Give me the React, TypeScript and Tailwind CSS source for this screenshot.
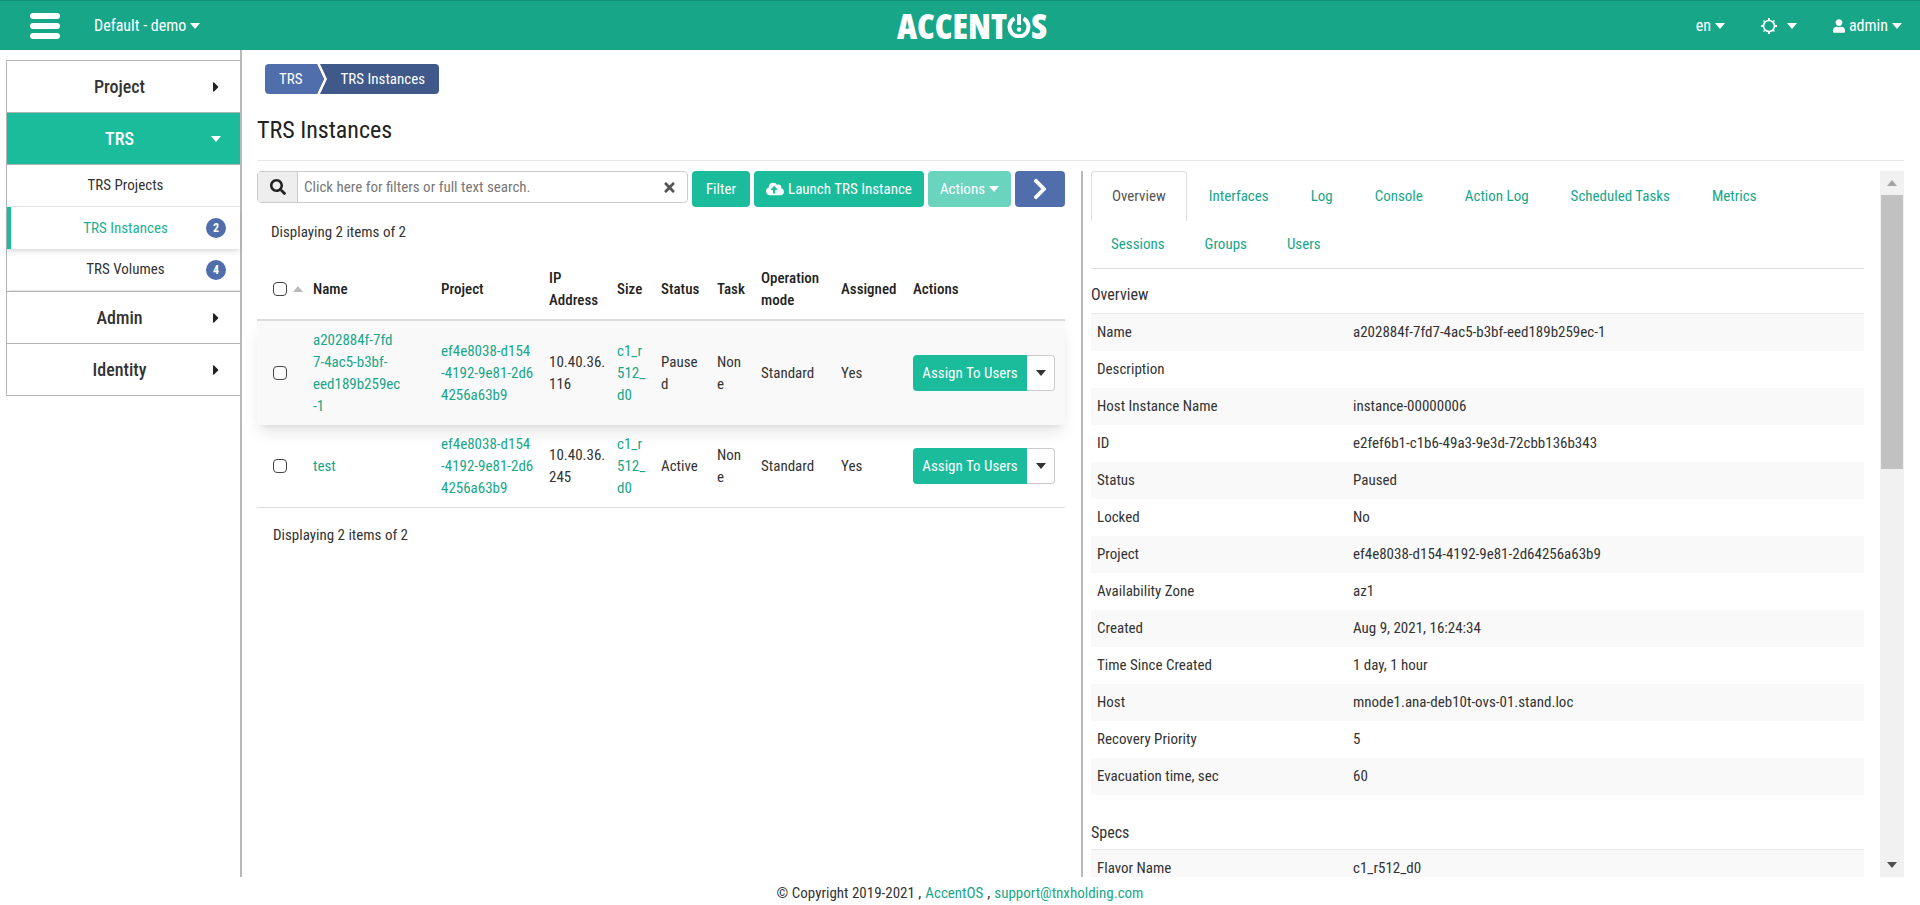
import { FaCaretRight, FaChevronRight, FaCloudUploadAlt, FaSearch, FaTimes, FaUser } from 'react-icons/fa'

function Caret({ className = '' }: { className?: string }) {
  return (
    <svg viewBox="0 0 10 6" className={`w-2.5 h-1.5 fill-current ${className}`}>
      <path d="M0 0h10L5 6z" />
    </svg>
  )
}

function SunIcon() {
  return (
    <svg viewBox="0 0 16 16" className="h-4 w-4 fill-current">
      <circle cx="8" cy="8" r="5.5" fill="none" stroke="currentColor" strokeWidth="1.6" />
      <path d="M7 0h2v2H7zM7 14h2v2H7zM0 7h2v2H0zM14 7h2v2h-2zM2.2 2.2l1.6.2.2 1.6-1.6-.2zM13.8 2.2l-.2 1.6-1.6.2.2-1.6zM2.2 13.8l.2-1.6 1.6-.2-.2 1.6zM13.8 13.8l-1.6-.2-.2-1.6 1.6.2z" />
    </svg>
  )
}

function Checkbox() {
  return <input type="checkbox" readOnly className="block h-3.5 w-3.5 appearance-none rounded-sm border border-[#444] bg-white" />
}

function NavGroup({ label, active }: { label: string; active?: boolean }) {
  return (
    <div
      className={`flex h-13 items-center pl-10 text-lg font-medium border-b border-[#b3b3b3] ${
        active ? 'bg-[#1abc9c] text-white' : 'text-[#333]'
      }`}
    >
      <span className="flex-1 text-center">{label}</span>
      <span className="flex w-12 justify-center">
        {active ? <Caret /> : <FaCaretRight className="text-base text-[#222]" />}
      </span>
    </div>
  )
}

function NavItem({ label, badge, active }: { label: string; badge?: number; active?: boolean }) {
  return (
    <div
      className={`flex h-10.5 items-center pl-12 border-l-4 ${
        active
          ? 'border-l-[#1abc9c] text-[#1ab394] shadow-md relative'
          : 'border-l-transparent text-[#333] border-b border-b-[#e7e7e7]'
      }`}
    >
      <span className="flex-1 text-center">{label}</span>
      <span className="flex w-12 justify-center">
        {badge && (
          <span className="flex h-5 w-5 items-center justify-center rounded-full bg-[#506eab] text-xs font-bold text-white">
            {badge}
          </span>
        )}
      </span>
    </div>
  )
}

function Sidebar() {
  return (
    <aside className="w-[242px] shrink-0 border-r-2 border-[#b9b9b9] pl-1.5 pt-2.5">
      <div className="border-l border-t border-[#b3b3b3]">
        <NavGroup label="Project" />
        <NavGroup label="TRS" active />
        <NavItem label="TRS Projects" />
        <NavItem label="TRS Instances" badge={2} active />
        <NavItem label="TRS Volumes" badge={4} />
        <div className="border-t border-[#b3b3b3]" />
        <NavGroup label="Admin" />
        <NavGroup label="Identity" />
      </div>
    </aside>
  )
}

function Lines({ lines }: { lines: string[] }) {
  return (
    <>
      {lines.map((line) => (
        <span key={line} className="block whitespace-nowrap">
          {line}
        </span>
      ))}
    </>
  )
}

const projectLines = ['ef4e8038-d154', '-4192-9e81-2d6', '4256a63b9']
const sizeLines = ['c1_r', '512_', 'd0']

const rows = [
  {
    name: ['a202884f-7fd', '7-4ac5-b3bf-', 'eed189b259ec', '-1'],
    ip: ['10.40.36.', '116'],
    status: ['Pause', 'd'],
    highlight: true,
  },
  {
    name: ['test'],
    ip: ['10.40.36.', '245'],
    status: ['Active'],
    highlight: false,
  },
]

function InstancesTable() {
  const th = 'px-2 py-2 text-left align-middle font-medium'
  const td = 'px-2 py-2 align-middle'
  return (
    <table className="w-full table-fixed border-collapse leading-5.5">
      <thead className="text-[#222]">
        <tr className="border-b-2 border-[#ddd]">
          <th className="w-12 py-2 pl-4 text-left align-middle">
            <span className="flex items-center gap-1.5">
              <Checkbox />
              <Caret className="rotate-180 text-[#bbb]" />
            </span>
          </th>
          <th className={`w-32 ${th}`}>Name</th>
          <th className={`w-27 ${th}`}>Project</th>
          <th className={`w-17 ${th}`}>
            IP
            <br />
            Address
          </th>
          <th className={`w-11 ${th}`}>Size</th>
          <th className={`w-14 ${th}`}>Status</th>
          <th className={`w-11 ${th}`}>Task</th>
          <th className={`w-20 ${th}`}>
            Operation
            <br />
            mode
          </th>
          <th className={`w-18 ${th}`}>Assigned</th>
          <th className={th}>Actions</th>
        </tr>
      </thead>
      <tbody className="text-[#333]">
        {rows.map((row) => (
          <tr key={row.name[0]} className={row.highlight ? 'bg-[#f9f9f9] shadow-lg' : 'border-b border-[#ddd]'}>
            <td className="py-2 pl-4 align-middle">
              <Checkbox />
            </td>
            <td className={`${td} text-[#18a689]`}>
              <Lines lines={row.name} />
            </td>
            <td className={`${td} text-[#18a689]`}>
              <Lines lines={projectLines} />
            </td>
            <td className={td}>
              <Lines lines={row.ip} />
            </td>
            <td className={`${td} text-[#18a689]`}>
              <Lines lines={sizeLines} />
            </td>
            <td className={td}>
              <Lines lines={row.status} />
            </td>
            <td className={td}>
              <Lines lines={['Non', 'e']} />
            </td>
            <td className={td}>Standard</td>
            <td className={td}>Yes</td>
            <td className={td}>
              <div className="flex h-9 w-[142px]">
                <button className="flex-1 rounded-l bg-[#1abc9c] text-white whitespace-nowrap">Assign To Users</button>
                <button className="flex w-7 items-center justify-center rounded-r border border-l-0 border-[#ccc] bg-white text-[#333]">
                  <Caret />
                </button>
              </div>
            </td>
          </tr>
        ))}
      </tbody>
    </table>
  )
}

function LeftPanel() {
  return (
    <section className="w-[808px] shrink-0">
      <div className="flex items-start gap-1">
        <div className="flex h-8 flex-1 items-center rounded border border-[#ccc]">
          <span className="flex h-full w-10 items-center justify-center border-r border-[#ccc] bg-[#eee] text-base text-[#222]">
            <FaSearch />
          </span>
          <input
            className="min-w-0 flex-1 px-1.5 outline-none placeholder:text-[#777]"
            placeholder="Click here for filters or full text search."
            readOnly
          />
          <FaTimes className="mr-2.5 text-[#555]" />
        </div>
        <button className="h-9 rounded bg-[#1abc9c] px-3.5 text-white">Filter</button>
        <button className="flex h-9 items-center gap-1 rounded bg-[#1abc9c] px-3 text-white">
          <FaCloudUploadAlt className="text-lg" />
          Launch TRS Instance
        </button>
        <button className="flex h-9 items-center gap-1 rounded bg-[#6bd4bf] px-3 text-white">
          Actions
          <Caret />
        </button>
        <button className="flex h-9 w-12.5 items-center justify-center rounded bg-[#506eab] text-2xl text-white">
          <FaChevronRight />
        </button>
      </div>
      <p className="mt-3.5 mb-4 px-3.5 leading-5.5 text-[#333]">Displaying 2 items of 2</p>
      <InstancesTable />
      <p className="mt-4 px-4 leading-5.5 text-[#333]">Displaying 2 items of 2</p>
    </section>
  )
}

const firstTabs = ['Interfaces', 'Log', 'Console', 'Action Log', 'Scheduled Tasks', 'Metrics']
const secondTabs = ['Sessions', 'Groups', 'Users']

const overview = [
  ['Name', 'a202884f-7fd7-4ac5-b3bf-eed189b259ec-1'],
  ['Description', ''],
  ['Host Instance Name', 'instance-00000006'],
  ['ID', 'e2fef6b1-c1b6-49a3-9e3d-72cbb136b343'],
  ['Status', 'Paused'],
  ['Locked', 'No'],
  ['Project', 'ef4e8038-d154-4192-9e81-2d64256a63b9'],
  ['Availability Zone', 'az1'],
  ['Created', 'Aug 9, 2021, 16:24:34'],
  ['Time Since Created', '1 day, 1 hour'],
  ['Host', 'mnode1.ana-deb10t-ovs-01.stand.loc'],
  ['Recovery Priority', '5'],
  ['Evacuation time, sec', '60'],
]

function DetailRow({ label, value, shaded }: { label: string; value: string; shaded: boolean }) {
  return (
    <div className={`flex h-9.25 items-center pl-1.5 text-[#333] ${shaded ? 'bg-[#f9f9f9]' : ''}`}>
      <span className="w-64">{label}</span>
      <span>{value}</span>
    </div>
  )
}

function DetailPanel() {
  return (
    <section className="flex min-h-0 flex-1 border-l-2 border-[#b9b9b9] pl-2">
      <div className="min-w-0 flex-1 overflow-hidden">
        <div className="flex h-12.5 text-[#18a689]">
          <span className="flex items-center rounded-t border border-b-0 border-[#ddd] px-5 text-[#555]">Overview</span>
          {firstTabs.map((tab) => (
            <span key={tab} className="ml-0.5 flex items-center px-5">
              {tab}
            </span>
          ))}
        </div>
        <div className="flex h-12 border-b border-[#ddd] text-[#18a689]">
          {secondTabs.map((tab) => (
            <span key={tab} className="flex items-center px-5">
              {tab}
            </span>
          ))}
        </div>
        <h3 className="pt-3 pb-1 text-base leading-7 text-[#333]">Overview</h3>
        <div className="border-t border-[#e7e7e7]">
          {overview.map(([label, value], i) => (
            <DetailRow key={label} label={label} value={value} shaded={i % 2 === 0} />
          ))}
        </div>
        <h3 className="pt-6 pb-0.5 text-base leading-7 text-[#333]">Specs</h3>
        <div className="border-t border-[#e7e7e7]">
          <DetailRow label="Flavor Name" value="c1_r512_d0" shaded />
        </div>
      </div>
      <div className="ml-4 flex w-6 flex-col items-center bg-[#f1f1f1]">
        <span className="flex h-6 items-center">
          <Caret className="rotate-180 text-[#a3a3a3]" />
        </span>
        <span className="h-[274px] w-5.5 bg-[#c1c1c1]" />
        <span className="flex-1" />
        <span className="flex h-6 items-center">
          <Caret className="text-[#505050]" />
        </span>
      </div>
    </section>
  )
}

function Logo() {
  return (
    <div className="ml-3 flex items-center font-['Open_Sans',sans-serif] text-[35px] leading-none font-extrabold text-white">
      <span>ACCENT</span>
      <svg viewBox="0 0 24 24" className="h-6 w-6">
        <path d="M7.5 4.5a9.5 9.5 0 1 0 9 0" fill="none" stroke="currentColor" strokeWidth="4" />
        <path d="M10 0h4v11h-4z" fill="currentColor" />
        <circle cx="12" cy="15.5" r="2.2" fill="currentColor" />
      </svg>
      <span>S</span>
    </div>
  )
}

function Header() {
  return (
    <header className="flex h-12.5 shrink-0 items-center border-t border-[#148f76] bg-[#18a689] text-white">
      <div className="flex flex-1 items-center pl-7.5">
        <div className="flex w-7.5 flex-col gap-1">
          <span className="h-1.5 rounded-sm bg-white" />
          <span className="h-1.5 rounded-sm bg-white" />
          <span className="h-1.5 rounded-sm bg-white" />
        </div>
        <span className="ml-8.5 flex items-center gap-1 text-base">
          Default - demo
          <Caret />
        </span>
      </div>
      <Logo />
      <div className="flex flex-1 items-center justify-end pr-4.5 text-base">
        <span className="flex items-center gap-1">
          en
          <Caret />
        </span>
        <span className="ml-9 flex items-center gap-2.5">
          <SunIcon />
          <Caret />
        </span>
        <span className="ml-9 flex items-center gap-1">
          <FaUser className="h-3.5 w-3" />
          admin
          <Caret />
        </span>
      </div>
    </header>
  )
}

export default function App() {
  return (
    <div className="flex h-screen flex-col overflow-hidden bg-white font-['Roboto',sans-serif] text-[15px] font-stretch-condensed">
      <Header />
      <div className="flex min-h-0 flex-1">
        <Sidebar />
        <main className="flex min-w-0 flex-1 flex-col pr-4 pl-3.75">
          <nav className="ml-2 mt-3.5 flex h-7.5 w-fit overflow-hidden rounded text-white">
            <span className="flex items-center bg-[#506eab] px-3.5">TRS</span>
            <svg viewBox="0 0 10 30" className="h-7.5 w-2.5">
              <path d="M0 0h10v30H0z" fill="#3f5a8a" />
              <path d="M0 0h3l7 15-7 15H0l7-15z" fill="#fff" />
              <path d="M0 0l7 15-7 15z" fill="#506eab" />
            </svg>
            <span className="flex items-center bg-[#3f5a8a] pr-3.5 pl-3.5">TRS Instances</span>
          </nav>
          <h1 className="flex h-[67px] items-center border-b border-[#e7e7e7] pt-1.5 text-2xl text-[#222]">TRS Instances</h1>
          <div className="mt-2.5 flex min-h-0 flex-1">
            <LeftPanel />
            <div className="ml-4 flex min-h-0 flex-1">
              <DetailPanel />
            </div>
          </div>
        </main>
      </div>
      <footer className="flex h-7 shrink-0 items-center justify-center gap-1 pt-1 text-[#333]">
        © Copyright 2019-2021 , <span className="text-[#18a689]">AccentOS</span> ,{' '}
        <span className="text-[#18a689]">support@tnxholding.com</span>
      </footer>
    </div>
  )
}
